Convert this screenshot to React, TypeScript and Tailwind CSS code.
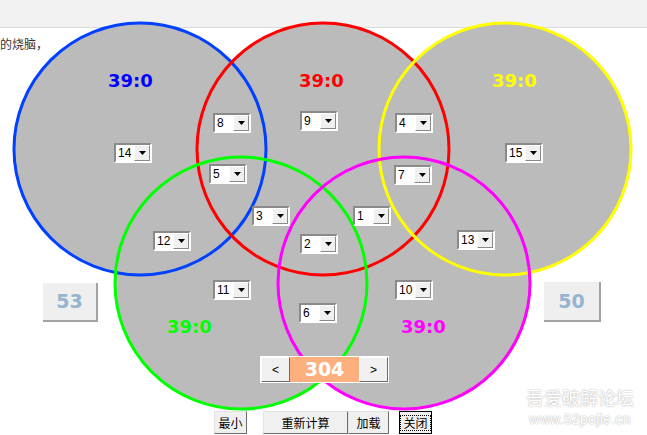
import React from 'react';

const circles = [
  { id: 'blue', cx: 140, cy: 149, color: '#0040ff' },
  { id: 'red', cx: 323, cy: 149, color: '#ff0000' },
  { id: 'yellow', cx: 505, cy: 149, color: '#ffff00' },
  { id: 'green', cx: 241, cy: 283, color: '#00ff00' },
  { id: 'magenta', cx: 404, cy: 283, color: '#ff00ff' },
];

const scores = [
  { x: 108, y: 71, color: 'text-[#0000ff]' },
  { x: 299, y: 71, color: 'text-[#ff0000]' },
  { x: 492, y: 71, color: 'text-[#ffff00]' },
  { x: 167, y: 317, color: 'text-[#00ff00]' },
  { x: 401, y: 317, color: 'text-[#ff00ff]' },
];

const pickers = [
  { v: 14, x: 114, y: 143 },
  { v: 8, x: 213, y: 113 },
  { v: 5, x: 209, y: 164 },
  { v: 3, x: 252, y: 206 },
  { v: 12, x: 153, y: 231 },
  { v: 9, x: 300, y: 111 },
  { v: 4, x: 395, y: 113 },
  { v: 7, x: 394, y: 165 },
  { v: 1, x: 353, y: 206 },
  { v: 2, x: 300, y: 234 },
  { v: 13, x: 457, y: 230 },
  { v: 15, x: 505, y: 143 },
  { v: 11, x: 213, y: 280 },
  { v: 10, x: 395, y: 280 },
  { v: 6, x: 299, y: 303 },
];

const Picker: React.FC<{ v: number; x: number; y: number }> = ({ v, x, y }) => (
  <div
    className="absolute w-[38px] h-[20px] flex border-2 border-t-[#8a8a8a] border-l-[#8a8a8a] border-b-white border-r-white bg-white"
    style={{ left: x, top: y }}
  >
    <div className="flex-1 bg-white text-[12px] leading-[16px] pl-[2px] text-black font-['Liberation_Sans',sans-serif]">{v}</div>
    <div className="w-[16px] h-full bg-[#f0f0f0] border border-t-white border-l-white border-b-[#8a8a8a] border-r-[#8a8a8a] flex items-center justify-center">
      <svg width="7" height="4" viewBox="0 0 7 4"><path d="M0 0h7L3.5 4z" fill="#000" /></svg>
    </div>
  </div>
);

const WinButton: React.FC<{ label: string; w: string; focused?: boolean }> = ({ label, w, focused }) => (
  <div
    className={`${w} h-[23px] bg-[#f0f0f0] flex items-center justify-center text-[12px] text-black font-['Noto_Sans_CJK_SC',sans-serif] ${
      focused
        ? 'border border-black'
        : 'border border-t-[#e3e3e3] border-l-[#e3e3e3] border-b-[#6d6d6d] border-r-[#6d6d6d]'
    }`}
  >
    {focused ? (
      <span className="border border-dotted border-black px-[2px] leading-[14px]">{label}</span>
    ) : (
      label
    )}
  </div>
);

export default function App() {
  return (
    <div className="relative w-[647px] h-[435px] bg-white overflow-hidden font-['DejaVu_Sans',sans-serif]">
      <div className="h-[28px] bg-[#f2f2f2] border-b border-[#dadada]" />
      <div className="pl-0 pt-[8px] text-[12px] text-[#333] font-['Noto_Sans_CJK_SC',sans-serif] leading-[16px]">的烧脑，</div>

      <svg className="absolute left-0 top-0" width="647" height="435">
        {circles.map(c => (
          <circle key={c.id + 'f'} cx={c.cx} cy={c.cy} r={126} fill="#bbbbbb" />
        ))}
        {circles.map(c => (
          <circle key={c.id} cx={c.cx} cy={c.cy} r={126} fill="none" stroke={c.color} strokeWidth={3} />
        ))}
      </svg>

      {scores.map((s, i) => (
        <div
          key={i}
          className={`absolute text-[18px] font-bold leading-[20px] ${s.color}`}
          style={{ left: s.x, top: s.y }}
        >
          39:0
        </div>
      ))}

      {pickers.map(p => (
        <Picker key={p.v} {...p} />
      ))}

      <div className="absolute left-[43px] top-[283px] w-[55px] h-[39px] bg-[#efefef] border-b-2 border-r-2 border-[#a3a3a3] flex items-center justify-center text-[19px] font-bold text-[#94b4d0]">
        53
      </div>
      <div className="absolute left-[544px] top-[282px] w-[57px] h-[40px] bg-[#efefef] border-b-2 border-r-2 border-[#a3a3a3] flex items-center justify-center text-[19px] font-bold text-[#94b4d0]">
        50
      </div>

      <div className="absolute left-[260px] top-[356px] w-[129px] h-[27px] border border-white bg-white flex">
        <div className="w-[29px] h-full bg-[#f0f0f0] border border-t-white border-l-white border-b-[#6d6d6d] border-r-[#6d6d6d] flex items-center justify-center text-[12px] text-black font-['Liberation_Sans',sans-serif]">&lt;</div>
        <div className="flex-1 h-full bg-[#fdb07e] flex items-center justify-center text-[19px] font-bold text-white">304</div>
        <div className="w-[29px] h-full bg-[#f0f0f0] border border-t-white border-l-white border-b-[#6d6d6d] border-r-[#6d6d6d] flex items-center justify-center text-[12px] text-black font-['Liberation_Sans',sans-serif]">&gt;</div>
      </div>

      <div className="absolute left-[214px] top-[411px] flex">
        <WinButton label="最小" w="w-[33px]" />
        <div className="w-[16px]" />
        <WinButton label="重新计算" w="w-[85px]" />
        <WinButton label="加载" w="w-[41px]" />
        <div className="w-[10px]" />
        <WinButton label="关闭" w="w-[33px]" focused />
      </div>

      <div className="absolute left-[526px] top-[386px] flex flex-col items-center gap-[4px] text-white [text-shadow:0_0_2px_#b5b5b5,0_0_1px_#c8c8c8]">
        <div className="text-[18px] leading-[22px] font-['Noto_Sans_CJK_SC',sans-serif]">吾爱破解论坛</div>
        <div className="text-[14px] leading-[14px] font-['Liberation_Sans',sans-serif] tracking-[0.3px]">www.52pojie.cn</div>
      </div>
    </div>
  );
}
